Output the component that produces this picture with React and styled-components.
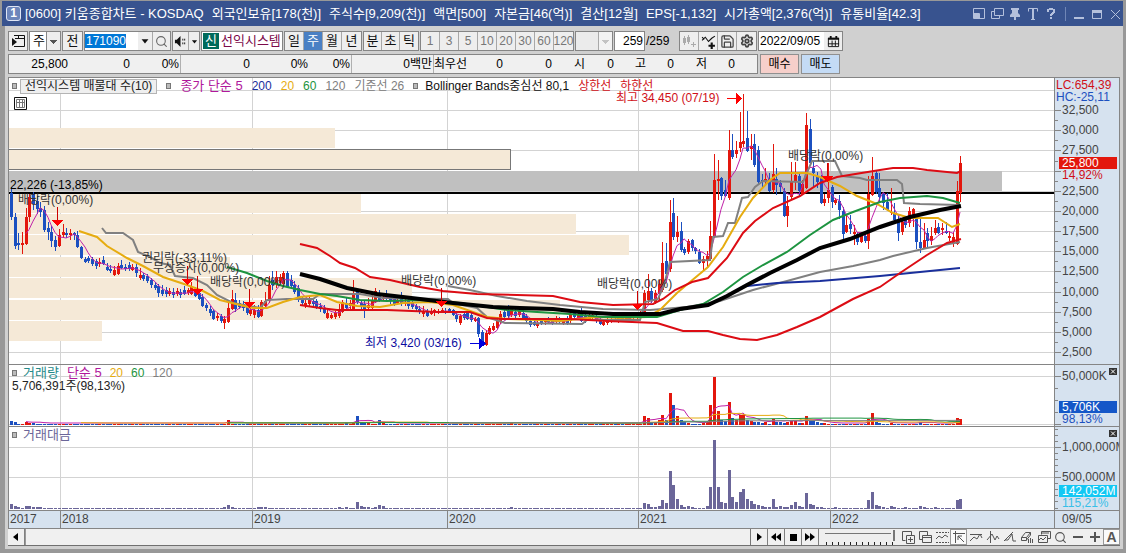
import { useState } from 'react';
import styled, { createGlobalStyle } from 'styled-components';
import { Search, Save, Settings, Pin } from 'lucide-react';

const Global = createGlobalStyle`
  * { box-sizing: border-box; }
  body { margin: 0; background: #a0a0a0; }
  body, button, input, select {
    font-family: 'Liberation Sans', 'Noto Sans CJK KR', sans-serif;
    font-size: 12px;
    line-height: 16px;
    color: #000;
  }
`;

const RED = '#e3170d';
const BLUE = '#1c50c0';
const GRAY = '#808080';

/* ---------- window ---------- */

const Window = styled.div`
  min-height: 100vh;
  display: flex;
  flex-direction: column;
  padding: 1px 3px 5px 2px;
  background: #989898;
`;

const TitleBar = styled.header`
  height: 25px;
  display: flex;
  align-items: center;
  padding: 0 1px 0 4px;
  background: #38538f;
  color: #fff;
`;

const WindowNo = styled.b`
  width: 15px;
  height: 15px;
  border: 1px solid #dfe6f5;
  border-radius: 3px;
  background: #6d86bb;
  line-height: 13px;
  text-align: center;
`;

const Title = styled.h1`
  flex: 1;
  min-width: 0;
  display: flex;
  gap: 8px;
  margin: 0 0 0 4px;
  overflow: hidden;
  white-space: nowrap;
  font-size: 13px;
  font-weight: normal;
`;

const TitleButtons = styled.div`
  display: flex;
  align-items: center;
  gap: 4px;
`;

const TitleButton = styled.button`
  width: 14px;
  height: 16px;
  padding: 0;
  border: 0;
  background: none;
  color: #b4c0dc;

  svg { display: block; }
`;

const TitleSplit = styled.i`
  width: 1px;
  height: 14px;
  margin: 0 2px 0 3px;
  background: #7086b6;
`;

const Body = styled.main`
  flex: 1;
  display: flex;
  flex-direction: column;
  margin-left: 3px;
  padding: 5px 3px 3px;
  background: #d0d0d0;
`;

/* ---------- toolbar ---------- */

const Toolbar = styled.div`
  display: flex;
  align-items: center;
  gap: 1px;
  height: 20px;
`;

const Group = styled.div`
  display: flex;
  height: 20px;
  width: ${(p) => p.$w || 'auto'};
  border: 1px solid #858585;
  background: #fff;
`;

const Tool = styled.button`
  flex: none;
  width: ${(p) => p.$w || 19}px;
  display: flex;
  align-items: center;
  justify-content: center;
  padding: 0;
  border: 0;
  border-right: 1px solid #a8a8a8;
  background: ${(p) => (p.$on ? '#4a80c4' : '#eeeeee')};
  color: ${(p) => (p.$on ? '#fff' : p.$dim ? '#777' : '#111')};
  font-size: ${(p) => (p.$dim ? 12 : 13)}px;

  &:last-child { border-right: 0; }
`;

const Field = styled.input`
  width: ${(p) => p.$w}px;
  min-width: 0;
  padding: 0 1px;
  border: 0;
  outline: 0;
  background: #fff;
  text-align: ${(p) => p.$align || 'left'};
`;

const CodeField = styled(Field)`
  padding: 0 1px;
  background: linear-gradient(#0078d7, #0078d7) 0 2px / 41px 14px no-repeat #fff;
  color: #fff;
`;

const Select = styled.select`
  width: ${(p) => p.$w}px;
  padding: 0 3px;
  border: 0;
  border-radius: 0;
  appearance: none;
  font-size: 13px;
  background:
    linear-gradient(#858585, #858585) right 13px top / 1px 100% no-repeat,
    linear-gradient(to bottom left, ${(p) => (p.disabled ? '#aaa' : '#555')} 50%, transparent 0) right 6px top 8px / 4px 4px no-repeat,
    linear-gradient(to bottom right, ${(p) => (p.disabled ? '#aaa' : '#555')} 50%, transparent 0) right 2px top 8px / 4px 4px no-repeat,
    linear-gradient(#eee, #eee) right top / 13px 100% no-repeat,
    ${(p) => (p.disabled ? '#e3e3e3' : '#fff')};
`;

const Market = styled.span`
  width: 16px;
  margin: 1px;
  background: #006a5b;
  color: #fff;
  font-size: 13px;
  text-align: center;
`;

const StockName = styled.span`
  padding-left: 1px;
  color: #7c0a4a;
  font-size: 13px;
  line-height: 18px;
  white-space: nowrap;
`;

const Total = styled.span`
  width: 31px;
  margin-right: 1px;
`;

const QuoteRow = styled.div`
  display: flex;
  gap: 2px;
  height: 20px;
  margin-top: 3px;
`;

const Quotes = styled.div`
  width: 750px;
  display: flex;
  align-items: center;
  border: 1px solid #858585;
  background: #f0f0f0;
`;

const Quote = styled.span`
  width: ${(p) => p.$w}px;
  line-height: 18px;
  padding-right: 1px;
  text-align: ${(p) => (p.$left ? 'left' : 'right')};
  white-space: nowrap;
  border-right: ${(p) => (p.$end ? '1px solid #b0b0b0' : '0')};
`;

const OrderButton = styled.button`
  width: 39px;
  padding: 0;
  border: 1px solid #909090;
  background: ${(p) => (p.$buy ? '#f6cfca' : '#c4dbf5')};
`;

/* ---------- chart ---------- */

const ChartBox = styled.section`
  display: grid;
  grid-template-columns: minmax(0, 1fr) 65px;
  grid-template-rows: 287px 62px 84px 17px;
  margin-top: 3px;
  border: 1px solid #858585;
`;

const Plot = styled.div`
  position: relative;
  overflow: hidden;
  background: #fff;
  border-bottom: 1px solid #858585;
`;

const Axis = styled.div`
  overflow: hidden;
  border-left: 1px solid #858585;
  border-bottom: ${(p) => (p.$last ? 0 : 1)}px solid #858585;
  background: #d6e2ef;
`;

const TimeAxis = styled.div`
  overflow: hidden;
  background: #d6e2ef;
`;

const Canvas = styled.svg`
  display: block;
  width: 100%;
  height: 100%;
`;

const Legend = styled.div`
  position: absolute;
  top: ${(p) => p.$top || 0}px;
  left: 3px;
  display: flex;
  align-items: center;
  gap: ${(p) => (p.$wide ? 9 : 8)}px;
  white-space: nowrap;
`;

const LegendItem = styled.span`
  color: ${(p) => p.color};
  font-size: ${(p) => (p.$small ? 12 : 13)}px;
`;

const Marker = styled.i`
  width: 5px;
  height: 6px;
  margin-right: ${(p) => p.$mr || 0}px;
  border: 1px solid #777;
  background: #bbb;
`;

const ProfileButton = styled.button`
  height: 15px;
  margin-left: -6px;
  padding: 0 4px;
  border: 1px solid #b4b4b4;
  background: #efefef;
  color: #222;
  line-height: 12px;
`;

/* ---------- bottom bar ---------- */

const BottomBar = styled.footer`
  display: flex;
  align-items: stretch;
  height: 17px;
  background: #efefef;
  border-bottom: 1px solid #707070;
`;

const ScrollTrack = styled.div`
  flex: 1;
  background: #f0f0f0;
  border-right: 1px solid #777;
  border-left: 1px solid #999;
`;

const SmallButton = styled.button`
  width: 17px;
  padding: 0;
  border: 0;
  border-right: 1px solid #808080;
  background: #f0f0f0;

  svg { display: block; margin: 0 auto; }
`;

const Zoom = styled.input`
  width: 70px;
  height: 16px;
  margin: 0 4px 0 6px;
  appearance: none;
  background:
    linear-gradient(#777, #777) 0 4px / 100% 1px no-repeat,
    repeating-linear-gradient(to right, #222 0 1px, transparent 1px 6px) 1px 13px / 100% 3px no-repeat;

  &::-webkit-slider-thumb {
    appearance: none;
    width: 4px;
    height: 11px;
    margin-top: -3px;
    border-right: 2px solid #777;
    background: #f0f0f0;
  }
`;

const DrawTool = styled.button`
  width: 17px;
  padding: 0;
  border: 0;
  outline: ${(p) => (p.$on ? '1px solid #999' : '0')};
  outline-offset: -1px;
  background: ${(p) => (p.$on ? '#fafafa' : 'none')};
  color: #555;
  font-size: 14px;
  font-weight: bold;

  svg { display: block; margin: 0 auto; }
`;

/* ---------- data ---------- */

// weekly candles: [high, body top, body bottom, low, up?], in chart y
const bars = [
  [187, 193, 217, 220], [213, 217, 246, 249], [233, 243, 245, 250], [232, 243, 245, 254, 1],
  [208, 217, 244, 245, 1], [194, 197, 217, 222, 1], [192, 194, 204, 210], [196, 201, 209, 214],
  [202, 208, 212, 217], [206, 210, 230, 232], [222, 228, 232, 240], [226, 232, 241, 247],
  [236, 240, 247, 251], [229, 235, 246, 247, 1], [224, 232, 235, 238, 1], [228, 233, 235, 238],
  [229, 233, 235, 240, 1], [232, 233, 235, 240], [231, 235, 247, 248], [246, 247, 258, 259],
  [257, 259, 262, 263], [256, 258, 261, 263], [257, 259, 264, 266], [259, 261, 266, 269],
  [258, 262, 264, 267, 1], [256, 260, 264, 265], [263, 267, 270, 271], [265, 269, 271, 273],
  [266, 270, 275, 276, 1], [263, 266, 274, 275, 1], [260, 265, 268, 269], [264, 267, 269, 271],
  [262, 265, 269, 271], [264, 267, 270, 271, 1], [264, 267, 273, 277], [268, 275, 278, 280, 1],
  [273, 275, 279, 281], [274, 276, 281, 283], [278, 280, 285, 288], [282, 285, 288, 290],
  [284, 286, 293, 297], [285, 290, 294, 296], [287, 290, 294, 297], [288, 291, 294, 296, 1],
  [288, 292, 295, 298], [288, 291, 294, 296, 1], [289, 292, 295, 298], [286, 290, 294, 295],
  [288, 290, 293, 295, 1], [282, 287, 294, 295, 1], [287, 289, 296, 297], [290, 293, 299, 300],
  [294, 297, 306, 307], [303, 305, 308, 311], [306, 309, 313, 316], [309, 311, 319, 320],
  [313, 316, 318, 321, 1], [314, 316, 321, 323], [316, 319, 323, 329, 1], [303, 308, 322, 323, 1],
  [290, 299, 309, 310, 1], [293, 300, 309, 312], [300, 303, 307, 309], [301, 304, 308, 311],
  [303, 307, 313, 315], [307, 310, 314, 316, 1], [305, 310, 315, 318, 1], [305, 310, 317, 318],
  [300, 302, 316, 317, 1], [292, 301, 306, 309, 1], [276, 285, 301, 303, 1], [271, 280, 285, 290],
  [271, 277, 284, 288, 1], [274, 277, 283, 285, 1], [271, 273, 284, 286, 1], [271, 273, 287, 288],
  [275, 280, 286, 288], [281, 285, 292, 294], [285, 288, 299, 302], [297, 299, 303, 306],
  [299, 303, 306, 308, 1], [297, 300, 304, 306, 1], [299, 301, 304, 307], [299, 301, 307, 309],
  [303, 306, 309, 312], [305, 308, 313, 314], [308, 313, 318, 319, 1], [313, 315, 318, 319, 1],
  [311, 313, 317, 319, 1], [304, 310, 316, 318, 1], [300, 302, 312, 313, 1], [298, 303, 308, 310],
  [300, 303, 306, 309, 1], [280, 294, 309, 310, 1], [290, 291, 302, 304], [300, 303, 307, 310],
  [300, 304, 309, 318], [298, 305, 308, 311, 1], [293, 300, 308, 310, 1], [288, 291, 302, 303, 1],
  [290, 294, 300, 302], [293, 297, 299, 300, 1], [290, 296, 299, 301], [294, 297, 300, 304],
  [296, 299, 304, 306], [297, 301, 303, 305, 1], [292, 298, 304, 306], [298, 302, 304, 306, 1],
  [298, 301, 306, 309], [301, 303, 307, 309], [304, 306, 309, 312], [306, 309, 312, 314],
  [306, 311, 314, 317, 1], [309, 312, 316, 317], [308, 311, 314, 315, 1], [309, 310, 312, 316, 1],
  [309, 311, 313, 314, 1], [308, 310, 312, 313, 1], [308, 311, 313, 314], [308, 309, 312, 313],
  [309, 310, 315, 316], [312, 315, 319, 322], [314, 316, 323, 325, 1], [311, 314, 318, 320],
  [309, 311, 319, 320], [311, 315, 320, 322], [317, 319, 321, 322, 1], [317, 318, 334, 337],
  [330, 332, 345, 346], [330, 333, 345, 346, 1], [326, 328, 334, 335, 1], [323, 326, 330, 331, 1],
  [317, 320, 328, 329, 1], [311, 314, 321, 324, 1], [309, 312, 317, 320], [305, 310, 316, 318],
  [307, 309, 315, 317, 1], [308, 312, 316, 318], [309, 311, 315, 317, 1], [310, 313, 318, 319],
  [314, 316, 321, 323], [318, 321, 325, 327], [320, 322, 325, 326], [319, 323, 326, 328, 1],
  [318, 321, 324, 325], [318, 320, 322, 325, 1], [317, 319, 322, 324], [318, 320, 323, 325],
  [316, 318, 320, 323, 1], [317, 319, 322, 324], [318, 320, 323, 325, 1], [316, 318, 323, 325],
  [310, 314, 321, 323, 1], [311, 313, 317, 319], [310, 314, 318, 319, 1], [308, 312, 321, 322],
  [312, 315, 320, 323], [311, 315, 319, 321, 1], [313, 315, 317, 319, 1], [315, 317, 321, 323],
  [317, 320, 324, 325], [319, 322, 325, 326, 1], [318, 321, 323, 325, 1], [317, 320, 322, 323, 1],
  [316, 319, 321, 322], [315, 318, 321, 323, 1], [315, 318, 320, 322], [315, 317, 320, 321, 1],
  [314, 316, 319, 320, 1], [313, 316, 318, 320, 1], [312, 315, 317, 319, 1], [311, 313, 315, 318, 1],
  [290, 293, 313, 318, 1], [274, 291, 300, 303, 1], [288, 291, 301, 303], [290, 293, 302, 304, 1],
  [280, 284, 294, 300, 1], [242, 263, 290, 292, 1], [243, 261, 274, 282], [200, 222, 269, 272, 1],
  [198, 213, 237, 240], [216, 232, 237, 242, 1], [222, 231, 250, 252], [247, 249, 253, 255],
  [239, 241, 252, 254, 1], [239, 240, 248, 251], [247, 248, 251, 254], [249, 252, 263, 264],
  [256, 259, 263, 271, 1], [251, 256, 260, 268, 1], [221, 236, 259, 261, 1], [154, 180, 236, 238, 1],
  [160, 179, 181, 200, 1], [177, 178, 196, 200], [180, 190, 196, 197], [130, 150, 198, 200, 1],
  [134, 150, 157, 159], [141, 150, 154, 158, 1], [112, 142, 148, 152, 1], [94, 141, 144, 147, 1],
  [111, 138, 151, 152], [134, 146, 149, 160, 1], [134, 144, 165, 167], [146, 150, 182, 184],
  [174, 180, 182, 187], [168, 179, 182, 185, 1], [173, 179, 191, 192], [144, 174, 190, 193, 1],
  [168, 179, 185, 195], [180, 183, 187, 192], [188, 191, 216, 217], [196, 206, 216, 227, 1],
  [162, 182, 197, 200, 1], [162, 175, 181, 190, 1], [172, 176, 191, 196], [180, 184, 194, 195, 1],
  [113, 125, 188, 189, 1], [119, 129, 163, 166], [160, 168, 173, 187], [172, 176, 182, 188],
  [175, 177, 203, 204], [194, 199, 203, 206, 1], [163, 190, 198, 203, 1], [185, 187, 202, 208],
  [198, 200, 203, 205, 1], [195, 201, 210, 219], [207, 211, 234, 242], [215, 225, 232, 233, 1],
  [215, 224, 229, 234], [225, 232, 234, 245, 1], [232, 234, 242, 245], [232, 235, 242, 243, 1],
  [233, 236, 241, 243], [176, 194, 241, 249, 1], [157, 176, 195, 196, 1], [171, 173, 192, 194],
  [173, 188, 197, 203], [193, 194, 203, 210], [193, 202, 210, 211], [188, 212, 213, 215, 1],
  [203, 213, 220, 223], [214, 220, 233, 241], [218, 222, 232, 235, 1], [218, 219, 225, 228],
  [207, 211, 223, 227, 1], [208, 209, 217, 227, 1], [215, 217, 242, 249], [217, 242, 248, 253],
  [223, 240, 248, 249, 1], [228, 233, 241, 247], [227, 236, 241, 245, 1], [220, 228, 233, 235, 1],
  [223, 227, 233, 234], [223, 228, 230, 235, 1], [222, 231, 233, 234], [231, 236, 238, 241, 1],
  [232, 237, 243, 247, 1], [181, 191, 244, 245, 1], [156, 163, 193, 202, 1],
];

// weeks that stand out; every other week is one pixel high
const volumePeaks = {
  0: 4, 1: 3, 4: 3, 5: 2, 6: 2, 59: 5, 91: 2, 93: 2, 94: 9, 95: 3, 96: 2, 97: 2, 100: 5, 101: 2,
  136: 2, 172: 9, 173: 7, 174: 3, 175: 3, 176: 5, 177: 10, 178: 5, 179: 32, 180: 20, 181: 9,
  182: 5, 183: 3, 184: 2, 188: 2, 189: 3, 190: 20, 191: 48, 192: 14, 193: 5, 194: 4, 195: 23,
  196: 7, 197: 5, 198: 10, 199: 10, 200: 5, 201: 4, 202: 3, 203: 3, 204: 2, 205: 3, 207: 6,
  208: 3, 209: 3, 210: 2, 211: 3, 212: 4, 213: 4, 214: 2, 215: 2, 216: 9, 217: 4, 218: 4,
  219: 3, 220: 2, 221: 2, 233: 6, 234: 12, 235: 3, 236: 2, 239: 2, 247: 3, 257: 7, 258: 6,
};
const valuePeaks = {
  0: 5, 1: 3, 2: 2, 4: 3, 5: 3, 6: 2, 7: 2, 8: 2, 58: 2, 59: 4, 60: 2, 67: 2, 68: 2, 69: 2,
  89: 2, 91: 2, 94: 7, 95: 3, 96: 2, 97: 2, 99: 2, 100: 4, 101: 3, 136: 2,
  172: 6, 173: 5, 174: 2, 175: 2, 176: 3, 177: 9, 178: 6, 179: 38, 180: 24, 181: 10, 182: 4,
  183: 2, 184: 3, 185: 2, 189: 3, 190: 22, 191: 69, 192: 22, 193: 7, 194: 6, 195: 39, 196: 12,
  197: 7, 198: 17, 199: 20, 200: 10, 201: 8, 202: 5, 203: 4, 204: 3, 205: 2, 206: 2, 207: 10,
  208: 2, 209: 3, 210: 2, 211: 2, 212: 4, 213: 7, 214: 3, 215: 2, 216: 16, 217: 5, 218: 4,
  219: 2, 220: 2, 224: 2, 233: 9, 234: 17, 235: 4, 236: 3, 237: 2, 239: 3, 240: 2, 243: 2,
  247: 3, 248: 2, 251: 2, 257: 9, 258: 10,
};

const weekX = (i) => Math.round(11 + 3.68 * i);
const volumes = bars.map((b, i) => volumePeaks[i] || 1);

// moving average as polyline points
function average(values, n) {
  return values
    .map((v, i) => {
      if (i < n - 1) return null;
      let sum = 0;
      for (let k = i - n + 1; k <= i; k++) sum += values[k];
      return weekX(i) + ',' + (sum / n).toFixed(1);
    })
    .filter(Boolean)
    .join(' ');
}

const closeMa5 = average(bars.map((b) => (b[4] ? b[1] : b[2])), 5);
const volumeY = volumes.map((v) => 424 - v);

const yearLines = [60, 252, 447, 638, 830];

const profile = [
  [128, 335], [149, 511], [171, 1002], [193, 361], [214, 576],
  [235, 629], [257, 230], [278, 412], [300, 560], [321, 102],
];

const indicators = [
  ['#808080', 2, '448,286 470,290 497,296 527,301 560,305 603,309 650,310 687,307 720,301 753,290 787,281 820,272 853,266 880,260 893,256 927,248 960,242'],
  ['#1a2f9c', 2, '747,286 777,283 820,281 880,276 920,272 960,268'],
  ['#808080', 2, '102,228 106,233 123,233 133,240 138,252 150,257 160,263 170,265 175,276 193,278 207,285 217,295 233,303 260,308 267,300 287,299 313,299 320,294 360,294 383,298 448,299 453,303 477,308 487,317 505,323 582,324 587,320 640,320 645,302 658,299 664,285 670,262 710,260 713,237 723,236 728,223 735,223 742,198 748,197 755,187 763,181 803,182 812,161 835,161 842,176 860,178 867,180 897,180 902,184 904,203 920,204 960,205'],
  ['#e6ac10', 2, '79,231 97,237 107,246 127,258 143,266 163,277 187,285 203,291 220,300 240,305 253,308 267,308 283,302 300,297 320,295 337,302 357,306 380,307 403,303 430,302 453,305 473,312 487,317 507,319 537,320 560,321 597,317 620,318 647,317 660,310 677,293 690,282 708,267 723,247 740,217 753,198 770,180 780,173 807,173 820,177 840,186 857,196 877,204 893,213 910,218 938,218 952,227 960,224'],
  ['#1d9440', 2, '227,267 247,273 267,281 283,286 300,290 320,294 337,296 360,300 387,301 420,300 460,303 487,307 507,310 537,312 570,314 603,317 657,317 680,310 703,304 723,292 743,277 763,265 787,252 810,235 833,220 853,212 880,202 900,198 927,196 943,198 960,203'],
  ['#000000', 4, '300,274 320,279 347,288 377,294 420,299 453,303 493,307 520,308 553,309 580,312 613,314 660,314 680,309 708,305 727,296 747,285 770,273 797,260 820,248 850,239 880,227 910,217 940,210 961,206'],
  ['#dc0c14', 2, '300,244 317,248 330,256 340,263 355,268 370,277 390,280 420,287 443,291 477,294 553,296 580,302 613,305 653,304 663,299 675,290 692,282 708,278 727,258 743,233 755,221 773,208 800,196 820,183 837,177 880,170 893,168 913,168 927,170 957,173 961,171'],
  ['#dc0c14', 2, '300,305 320,308 337,310 387,310 437,312 470,312 487,318 503,319 570,319 607,321 657,323 670,327 683,331 708,331 723,335 740,339 757,340 777,335 797,327 820,317 853,299 880,287 900,273 927,255 947,243 961,239'],
];

const notes = [
  [18, 204, '배당락(0,00%)', 57, 220],
  [142, 262, '권리락(-33,11%)', 187, 279],
  [153, 272, '무상증자(0,00%)', 197, 289],
  [210, 286, '배당락(0,00%)', 249, 302],
  [401, 285, '배당락(0,00%)', 441, 301],
  [597, 288, '배당락(0,00%)', 637, 304],
  [788, 160, '배당락(0,00%)', 827, 176],
];

const prices = [
  ['32,500', 110], ['30,000', 130], ['27,500', 150], [null, 171], ['22,500', 191],
  ['20,000', 211], ['17,500', 231], ['15,000', 251], ['12,500', 271], ['10,000', 292],
  ['7,500', 312], ['5,000', 332], ['2,500', 352],
];

/* ---------- parts ---------- */

function Grid({ rows, top }) {
  return (
    <g fill='#d3d3d3' shapeRendering='crispEdges'>
      {rows.map((y) => <rect key={y} x='9' y={y} width='100%' height='1' />)}
      {yearLines.map((x) => <rect key={x} x={x} y={top} width='1' height='100%' />)}
    </g>
  );
}

function PricePlot() {
  return (
    <Canvas role='img' aria-label='주가 차트'>
      <g transform='translate(-9 -78)' shapeRendering='crispEdges'>
        <Grid rows={[90, ...prices.map((p) => p[1])]} top={78} />
        {profile.map(([y, right]) => (
          <rect key={y} x='9' y={y} width={right - 9} height='20'
            fill={y === 171 ? '#c0c0c0' : '#f5e9d7'} />
        ))}
        <rect x='8' y='149' width='502' height='20' fill='none' stroke='#777'
          transform='translate(.5 .5)' />
        <rect x='9' y='192' width='100%' height='2' fill='#000' />
        {bars.map(([hi, top, bottom, lo, up], i) => (
          <g key={i} fill={up ? RED : BLUE}>
            <rect x={weekX(i)} y={hi} width='1' height={lo - hi} />
            <rect x={weekX(i) - 1} y={top} width='3' height={bottom - top} />
          </g>
        ))}
        <g fill='none' shapeRendering='auto'>
          <polyline points={closeMa5} stroke='#c021a8' strokeWidth='1' />
          {indicators.map(([color, width, points]) => (
            <polyline key={points} points={points} stroke={color} strokeWidth={width} />
          ))}
        </g>
        {notes.map(([x, y, text, ax, ay]) => (
          <g key={x}>
            <rect x={ax} y={ay - 13} width='1' height='14' fill='#c00' />
            <path d={`M${ax - 5} ${ay}h11l-5 6h-1z`} fill='#f00' />
            <text x={x} y={y} fontSize='12' fill='#333'>{text}</text>
          </g>
        ))}
        <text x='10' y='189' fontSize='12'>22,226 (-13,85%)</text>
        <text x='616' y='102' fontSize='12' fill='#d01018'>최고 34,450 (07/19)</text>
        <path d='M727 98h9v-5l6 5v1l-6 5v-5h-9z' fill='#f00' />
        <text x='365' y='347' fontSize='12' fill='#0c0ca0'>최저 3,420 (03/16)</text>
        <path d='M470 343h9v-5l7 5v1l-7 5v-5h-9z' fill='#00d' />
      </g>
    </Canvas>
  );
}

function Bars({ values, base, color }) {
  return values.map((v, i) => (
    <rect key={i} x={weekX(i) - 1} y={base - v} width='3' height={v} fill={color(i)} />
  ));
}

function VolumePlot() {
  return (
    <Canvas role='img' aria-label='거래량'>
      <g transform='translate(-9 -365)' shapeRendering='crispEdges'>
        <Grid rows={[376, 424]} top={365} />
        <Bars values={volumes} base={425} color={(i) => (bars[i][4] ? RED : BLUE)} />
        <g fill='none' strokeWidth='1' shapeRendering='auto'>
          <polyline points={average(volumeY, 5)} stroke='#c021a8' />
          <polyline points={average(volumeY, 20)} stroke='#e6ac10' />
          <polyline points={average(volumeY, 60)} stroke='#1d9440' />
          <polyline points={average(volumeY, 120)} stroke='#808080' />
        </g>
      </g>
    </Canvas>
  );
}

function ValuePlot() {
  return (
    <Canvas role='img' aria-label='거래대금'>
      <g transform='translate(-9 -427)' shapeRendering='crispEdges'>
        <Grid rows={[447, 477]} top={427} />
        <Bars values={bars.map((b, i) => valuePeaks[i] || 1)} base={509} color={() => '#6b6699'} />
      </g>
    </Canvas>
  );
}

// right hand scale; the tag is the latest value on a filled ground
function Scale({ top, ticks, minor, tag, close, children }) {
  return (
    <Canvas>
      <g transform={`translate(-1055 ${-top})`}>
        <g fill='#858585' shapeRendering='crispEdges'>
          {minor.map((y) => <rect key={y} x='1055' y={y} width='3' height='1' />)}
          {ticks.map(([t, y]) => <rect key={y} x='1055' y={y} width='6' height='1' />)}
        </g>
        {ticks.map(([t, y]) => (
          <text key={y} x='1062' y={y + 4} fontSize='12' fill='#444'>{t}</text>
        ))}
        <rect x='1059' y={tag.y} width='58' height='12' fill={tag.bg} />
        <text x='1062' y={tag.y + 10} fontSize='12' fill='#fff'>{tag.text}</text>
        <text x='1062' y={tag.y + 22} fontSize='12' fill={tag.color}>{tag.rate}</text>
        {close && (
          <g transform={`translate(1109 ${close})`}>
            <rect width='8' height='7' fill='#333' />
            <path d='M2 1.5l4 4m0-4l-4 4' stroke='#fff' />
          </g>
        )}
        {children}
      </g>
    </Canvas>
  );
}

const line = { fill: 'none', stroke: 'currentColor', strokeWidth: 1 };

function Icon({ d, fill, size = 14 }) {
  return (
    <svg width={size} height={size} viewBox='0 0 14 14'>
      <path d={d} {...line} />
      {fill && <path d={fill} fill='currentColor' />}
    </svg>
  );
}

const drawTools = [
  ['영역 추가', 'M1.5 1.5h9v4M1.5 1.5v9h3M5.5 5.5h8v8h-8zM9.5 7v5M7 9.5h5'],
  ['창 겹치기', 'M4.5 9.5h-3v-8h8v4M4.5 5.5h9v7h-9zM4.5 7.5h9'],
  ['구간 보기', 'M1 2.5h2m1 0h2m1 0h2m1 0h2m1 0h1M1 12.5h2m1 0h2m1 0h2m1 0h2m1 0h1M1 9l3-3 3 2 3-3 3 2'],
  ['십자선', 'M1 3.5h12M3.5 1v12M6 6l6 6M6 10V6h4'],
  ['추세선', 'M1 4.5h12M1 11l4-4 3 2 3-5 2 4'],
  ['수직선', 'M4.5 1v12M1 10l5-6 3 6 2-4 2 3'],
  ['각도선', 'M1 11l9-9M2 10h3l4-6 1 7h3'],
  ['지우개', 'M1.5 7.5l4-5h5l-4 5zM1.5 7.5v3h5v-3M6.5 10l4-5V2.5M8.5 9v4M10.5 8v5M12.5 9v4'],
  ['지표', 'M4.5 4.5v-3h9v7h-3M1.5 5.5h9v7h-9zM2 10l2-2 2 2 3-3M5 3h7'],
];

const periods = ['일', '주', '월', '년'];
const ticks = ['분', '초', '틱'];
const minutes = [1, 3, 5, 10, 20, 30, 60, 120];

const titleParts = [
  '[0600] 키움종합차트 - KOSDAQ', '외국인보유[178(천)]', '주식수[9,209(천)]', '액면[500]',
  '자본금[46(억)]', '결산[12월]', 'EPS[-1,132]', '시가총액[2,376(억)]', '유통비율[42.3]',
];

const quotes = [
  ['25,800', 60], ['0', 62], ['0%', 50, 1], ['0', 70], ['0%', 58], ['0%', 43, 1],
  ['0백만', 82, 1], ['최우선', 36, 0, 1], ['0', 34], ['0', 49], ['', 21, 1],
  ['시', 14, 0, 1], ['0', 27], ['고', 32], ['0', 28], ['저', 33], ['0', 28],
];

function App() {
  const [period, setPeriod] = useState('주');
  const [code, setCode] = useState('171090');
  const [count, setCount] = useState('259');
  const [date, setDate] = useState('2022/09/05');

  return (
    <>
      <Global />
      <Window>
        <TitleBar>
          <WindowNo>1</WindowNo>
          <Title>
            {titleParts.map((t) => <span key={t}>{t}</span>)}
          </Title>
          <TitleButtons>
            <TitleButton aria-label='화면 축소'><Icon d='M1.5 1.5h11v10h-11zM1.5 6.5h6v5' fill='M2 7h5v4H2z' /></TitleButton>
            <TitleButton aria-label='화면 복사'><Icon d='M4.5 1.5h9v7h-9zM4 4.5H1.5v7h8V9' /></TitleButton>
            <TitleButton aria-label='고정'><Icon d='M7 9v4' fill='M3 1h8v2h-1v3l2 2v2H2V8l2-2V3H3zM6 10h2v3H6z' /></TitleButton>
            <TitleButton aria-label='글꼴'><Icon d='M2.5 4.5v-3h9v3M5 12.5h4' fill='M6 2h2v10H6z' /></TitleButton>
            <TitleButton aria-label='도움말'><Icon d='' fill='M3 2h2V1h4v1h2v4h-1v1H9v1H8v1H6V7h1V6h1V5h1V3H5v2H3zM6 10h2v2H6z' /></TitleButton>
            <TitleSplit />
            <TitleButton aria-label='최소화'><Icon d='' fill='M2 10h10v2H2z' /></TitleButton>
            <TitleButton aria-label='최대화'><Icon d='M2.5 3.5h9v8h-9z' fill='M2 3h10v3H2z' /></TitleButton>
            <TitleButton aria-label='닫기'><Icon d='M3 3l9 9M12 3l-9 9' /></TitleButton>
          </TitleButtons>
        </TitleBar>

        <Body>
          <Toolbar>
            <Group>
              <Tool $w={18} aria-label='메뉴'><Icon d='M3 1.5h10.5v11H3M4 4.5h9M7.5 2v3' fill='M1 4l5 4-5 4z' /></Tool>
            </Group>
            <Group>
              <Select $w={30} aria-label='구분'><option>주</option></Select>
            </Group>
            <Group><Tool>전</Tool></Group>
            <Group>
              <CodeField $w={53} aria-label='종목코드' value={code} onChange={(e) => setCode(e.target.value)} />
              <Tool $w={15} aria-label='종목 목록'><Icon d='' fill='M3 5h8l-4 5z' size={12} /></Tool>
              <Tool $w={17} aria-label='종목 검색'><Search size={13} color='#666' /></Tool>
            </Group>
            <Group>
              <Tool $w={16} aria-label='음성'><Icon d='M9.5 4v2m0 2v2M11.5 4v2m0 2v2' fill='M1 5h2l4-4v12L3 9H1z' size={13} /></Tool>
              <Tool $w={10} aria-label='음성 설정'><Icon d='' fill='M3 5h8l-4 5z' size={9} /></Tool>
            </Group>
            <Group $w='82px'>
              <Market>신</Market>
              <StockName>선익시스템</StockName>
            </Group>
            <Group>
              {periods.map((p) => (
                <Tool key={p} $on={p === period} onClick={() => setPeriod(p)}>{p}</Tool>
              ))}
            </Group>
            <Group>
              {ticks.map((t) => <Tool key={t} $w={18}>{t}</Tool>)}
            </Group>
            <Group>
              {minutes.map((m) => <Tool key={m} $dim>{m}</Tool>)}
            </Group>
            <Group>
              <Select $w={36} disabled aria-label='분 간격'><option></option></Select>
            </Group>
            <Group>
              <Field $w={29} $align='right' aria-label='봉 개수' value={count} onChange={(e) => setCount(e.target.value)} />
            </Group>
            <Total>/259</Total>
            <Group>
              <Tool aria-label='차트 유형' $dim><svg width='15' height='15' fill='#aaa'><path d='M1 4h3v5H1zM5 3h3v5H5zM2 2h1v9H2zM6 1h1v9H6zM9 10h5v1H9zM11 8h1v5h-1z' /></svg></Tool>
              <Tool aria-label='지표 추가'><Icon d='M1 6l3-3 3 4 3-3 3-2M1 3l2 2' fill='M7 10h6v2H7zM9 8h2v6H9z' size={15} /></Tool>
              <Tool aria-label='저장'><Save size={15} color='#444' strokeWidth={2} /></Tool>
              <Tool aria-label='설정'><Settings size={14} color='#444' strokeWidth={3} /></Tool>
            </Group>
            <Group>
              <Field $w={65} aria-label='기준일' value={date} onChange={(e) => setDate(e.target.value)} />
              <Tool $w={18} aria-label='달력'><Icon d='M1.5 3.5h11v9h-11zM5.5 6v6M9 6v6M1 9.5h12' fill='M1 3h12v2H1zM3 1h2v3H3zM9 1h2v3H9z' size={13} /></Tool>
            </Group>
          </Toolbar>

          <QuoteRow>
            <Quotes>
              {quotes.map(([text, w, end, left], i) => (
                <Quote key={i} $w={w} $end={end} $left={left}>{text}</Quote>
              ))}
            </Quotes>
            <OrderButton $buy>매수</OrderButton>
            <OrderButton>매도</OrderButton>
          </QuoteRow>

          <ChartBox>
            <Plot>
              <PricePlot />
              <Legend $wide>
                <Marker />
                <ProfileButton>선익시스템 매물대 수(10)</ProfileButton>
                <Marker />
                <LegendItem color='#b0189c'>종가 단순 5</LegendItem>
                <LegendItem $small color='#1a2f9c'>200</LegendItem>
                <LegendItem $small color='#e6ac10'>20</LegendItem>
                <LegendItem $small color='#1d9440'>60</LegendItem>
                <LegendItem $small color={GRAY}>120</LegendItem>
                <LegendItem $small color={GRAY}>기준선 26</LegendItem>
                <Marker $mr={-2} />
                <LegendItem $small color='#111'>Bollinger Bands중심선 80,1</LegendItem>
                <LegendItem $small color='#d01018'>상한선</LegendItem>
                <LegendItem $small color='#d01018'>하한선</LegendItem>
              </Legend>
              <Legend $top={19}>
                <svg width='18' height='14' aria-hidden='true'>
                  <path d='M2.5 .5h12v12h-12z' fill='#fff' stroke='#111' />
                  <path d='M4.5 2.5h8v8h-8zM7.5 2v9M10.5 2v9M4 5.5h9' fill='none' stroke='#777' />
                </svg>
              </Legend>
            </Plot>
            <Axis>
              <Scale top={78} ticks={prices}
                minor={[120, 140, 161, 181, 201, 221, 241, 261, 282, 302, 322, 342]}
                tag={{ y: 157, bg: RED, text: '25,800', rate: '14,92%', color: '#d01018' }}>
                <text x='1056' y='89' fontSize='12' fill='#d01018'>LC:654,39</text>
                <text x='1056' y='101' fontSize='12' fill={BLUE}>HC:-25,11</text>
              </Scale>
            </Axis>

            <Plot>
              <VolumePlot />
              <Legend>
                <Marker $mr={-2} />
                <LegendItem color='#268a8a'>거래량</LegendItem>
                <LegendItem color='#b0189c'>단순 5</LegendItem>
                <LegendItem $small color='#e6ac10'>20</LegendItem>
                <LegendItem $small color='#1d9440'>60</LegendItem>
                <LegendItem $small color={GRAY}>120</LegendItem>
              </Legend>
              <Legend $top={13}>
                <LegendItem $small color='#222'>5,706,391주(98,13%)</LegendItem>
              </Legend>
            </Plot>
            <Axis>
              <Scale top={365} ticks={[['50,000K', 376], [null, 424]]} minor={[388, 400, 412]} close={368}
                tag={{ y: 401, bg: '#1457c8', text: '5,706K', rate: '98,13%', color: BLUE }} />
            </Axis>

            <Plot>
              <ValuePlot />
              <Legend>
                <Marker $mr={-2} />
                <LegendItem color='#6b6699'>거래대금</LegendItem>
              </Legend>
            </Plot>
            <Axis>
              <Scale top={427} ticks={[['1,000,000M', 447], ['500,000M', 477]]}
                minor={[429, 435, 441, 453, 459, 465, 471, 483, 489, 495, 501, 508]} close={430}
                tag={{ y: 485, bg: '#12c8f4', text: '142,052M', rate: '115,21%', color: '#38bfe8' }} />
            </Axis>

            <TimeAxis>
              <Canvas>
                <g transform='translate(-9 0)'>
                  {yearLines.map((x, i) => (
                    <g key={x}>
                      <rect x={x} width='1' height='17' fill='#858585' />
                      <text x={x + 2} y='12' fontSize='12' fill='#444'>{2018 + i}</text>
                    </g>
                  ))}
                  <text x='10' y='12' fontSize='12' fill='#444'>2017</text>
                </g>
              </Canvas>
            </TimeAxis>
            <Axis $last>
              <Canvas><text x='7' y='12' fontSize='12' fill='#444'>09/05</text></Canvas>
            </Axis>
          </ChartBox>

          <BottomBar>
            <SmallButton aria-label='이전'><Icon d='' fill='M9 3v8L4 7z' /></SmallButton>
            <ScrollTrack />
            <SmallButton aria-label='다음'><Icon d='' fill='M5 3v8l5-4z' /></SmallButton>
            <SmallButton aria-label='뒤로 감기'><Icon d='' fill='M7 3v8L2 7zM12 3v8L7 7z' /></SmallButton>
            <SmallButton aria-label='정지'><Icon d='' fill='M4 4h7v7H4z' /></SmallButton>
            <SmallButton aria-label='앞으로 감기'><Icon d='' fill='M2 3v8l5-4zM7 3v8l5-4z' /></SmallButton>
            <Zoom type='range' aria-label='확대 비율' defaultValue='100' />
            {drawTools.map(([name, d]) => (
              <DrawTool key={name} aria-label={name} $on={name === '십자선'}><Icon d={d} /></DrawTool>
            ))}
            <DrawTool aria-label='돋보기'><Search size={13} /></DrawTool>
            <DrawTool aria-label='축소'><Icon d='' fill='M2 6h10v2H2z' /></DrawTool>
            <DrawTool aria-label='확대'><Icon d='' fill='M2 6h10v2H2zM6 2h2v10H6z' /></DrawTool>
            <DrawTool $on>A</DrawTool>
          </BottomBar>
        </Body>
      </Window>
    </>
  );
}

export default App;
